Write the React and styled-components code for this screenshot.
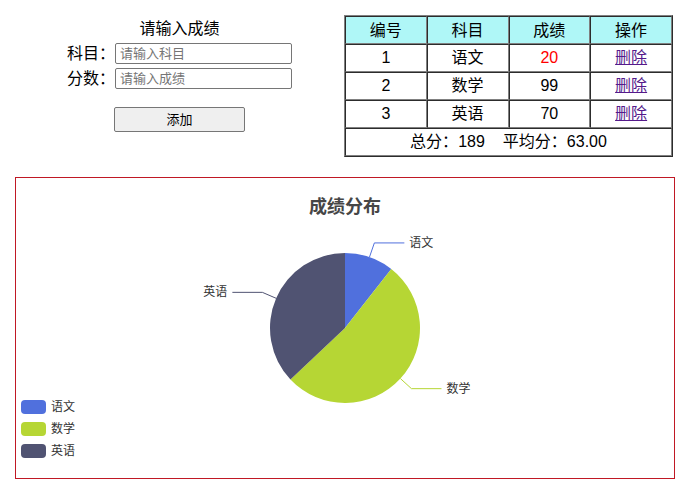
import React from "react";
import styled, { createGlobalStyle } from "styled-components";

const GlobalStyle = createGlobalStyle`
  * { box-sizing: border-box; }
  body {
    margin: 0;
    background: #fff;
    color: #000;
    font: 16px/24px "Liberation Sans", "Noto Sans CJK SC", sans-serif;
  }
`;

const Page = styled.main`
  padding: 15px 11px 9px 15px;
`;

const Top = styled.div`
  display: grid;
  grid-template-columns: 1fr 1fr;
  align-items: start;
  padding-right: 2px;
  margin-bottom: 20px;
`;

const Form = styled.form`
  display: flex;
  flex-direction: column;
  align-items: center;
`;

const Caption = styled.div`
  padding-top: 1px;
  line-height: 25px;
`;

const Field = styled.label`
  display: flex;
  align-items: center;
  height: 25px;
`;

const Input = styled.input`
  width: 177px;
  height: 21px;
  padding: 0 4px;
  border: 1px solid #767676;
  border-radius: 2px;
  background: #fff;
  font: 13px/18px "Liberation Sans", "Noto Sans CJK SC", sans-serif;
  &::placeholder { color: #757575; }
`;

const AddButton = styled.button`
  width: 131px;
  height: 25px;
  margin-top: 16px;
  padding: 0;
  border: 1px solid #767676;
  border-radius: 2px;
  background: #efefef;
  color: #000;
  font: 13px/20px "Liberation Sans", "Noto Sans CJK SC", sans-serif;
`;

const Table = styled.table`
  width: 100%;
  table-layout: fixed;
  border-collapse: separate;
  border-spacing: 0;
  border: 1px solid;
  border-color: #808080 #2c2c2c #2c2c2c #808080;
  text-align: center;
`;

const HeadCell = styled.th`
  height: 28px;
  padding: 1px 0 0;
  border: 1px solid;
  border-color: #2c2c2c #808080 #808080 #2c2c2c;
  background: #aff7f7;
  font-weight: 400;
`;

const Cell = styled.td`
  height: 28px;
  padding: 0;
  border: 1px solid;
  border-color: #2c2c2c #808080 #808080 #2c2c2c;
  color: ${(p) => (p.$failed ? "#f00" : "#000")};
`;

const Average = styled.span`
  margin-left: 18px;
`;

const DeleteLink = styled.a`
  color: #551a8b;
`;

const Panel = styled.section`
  display: grid;
  grid-template-rows: 50px 1fr;
  min-height: 302px;
  border: 1px solid #c01824;
`;

const Title = styled.h2`
  margin: 0;
  padding-top: 17px;
  color: #464646;
  font-size: 18px;
  line-height: 24px;
  text-align: center;
`;

const Pie = styled.svg`
  grid-area: 2 / 1;
  justify-self: center;
  font: 12px "Liberation Sans", "Noto Sans CJK SC", sans-serif;
`;

const Legend = styled.ul`
  grid-area: 2 / 1;
  align-self: end;
  justify-self: start;
  margin: 0;
  padding: 0 0 16px 5px;
  list-style: none;
`;

const LegendItem = styled.li`
  display: flex;
  align-items: center;
  gap: 5px;
  height: 22px;
  color: #333;
  font-size: 12px;
`;

const Swatch = styled.span`
  width: 25px;
  height: 14px;
  border-radius: 4px;
  background: ${(p) => p.$color};
`;

const scores = [
  { id: 1, subject: "语文", score: 20, color: "#5070dd" },
  { id: 2, subject: "数学", score: 99, color: "#b6d634" },
  { id: 3, subject: "英语", score: 70, color: "#505372" },
];
const total = scores.reduce((sum, s) => sum + s.score, 0);

const RADIUS = 75;
const point = (share, r) => {
  const angle = share * 2 * Math.PI;
  return [Math.sin(angle) * r, -Math.cos(angle) * r];
};

let sum = 0;
const slices = scores.map((s) => {
  const from = sum / total;
  sum += s.score;
  const to = sum / total;
  const middle = (from + to) / 2;
  const side = middle < 0.5 ? 1 : -1;
  const bend = point(middle, RADIUS + 15);
  return {
    ...s,
    path: `M0 0L${point(from, RADIUS)}A${RADIUS} ${RADIUS} 0 ${to - from > 0.5 ? 1 : 0} 1 ${point(to, RADIUS)}Z`,
    line: `${point(middle, RADIUS)} ${bend} ${bend[0] + side * 30},${bend[1]}`,
    side,
    labelX: bend[0] + side * 35,
    labelY: bend[1] + 4,
  };
});

function ScoreForm() {
  return (
    <Form onSubmit={(e) => e.preventDefault()}>
      <Caption>请输入成绩</Caption>
      <Field>科目：<Input type="text" placeholder="请输入科目" /></Field>
      <Field>分数：<Input type="text" placeholder="请输入成绩" /></Field>
      <AddButton type="submit">添加</AddButton>
    </Form>
  );
}

function ScoreTable() {
  return (
    <Table>
      <thead>
        <tr>
          {["编号", "科目", "成绩", "操作"].map((name) => (
            <HeadCell key={name} scope="col">{name}</HeadCell>
          ))}
        </tr>
      </thead>
      <tbody>
        {scores.map((s) => (
          <tr key={s.id}>
            <Cell>{s.id}</Cell>
            <Cell>{s.subject}</Cell>
            <Cell $failed={s.score < 60}>{s.score}</Cell>
            <Cell><DeleteLink href="#">删除</DeleteLink></Cell>
          </tr>
        ))}
      </tbody>
      <tfoot>
        <tr>
          <Cell colSpan={4}>
            <span>总分：{total}</span>
            <Average>平均分：{(total / scores.length).toFixed(2)}</Average>
          </Cell>
        </tr>
      </tfoot>
    </Table>
  );
}

function ScoreChart() {
  return (
    <Panel>
      <Title>成绩分布</Title>
      <Pie width="300" height="180" viewBox="-150 -100 300 180">
        {slices.map((s) => (
          <g key={s.id}>
            <path d={s.path} fill={s.color} />
            <polyline points={s.line} fill="none" stroke={s.color} />
            <text x={s.labelX} y={s.labelY} fill="#333" textAnchor={s.side > 0 ? "start" : "end"}>
              {s.subject}
            </text>
          </g>
        ))}
      </Pie>
      <Legend>
        {scores.map((s) => (
          <LegendItem key={s.id}><Swatch $color={s.color} />{s.subject}</LegendItem>
        ))}
      </Legend>
    </Panel>
  );
}

export default function App() {
  return (
    <Page>
      <GlobalStyle />
      <Top>
        <ScoreForm />
        <ScoreTable />
      </Top>
      <ScoreChart />
    </Page>
  );
}
